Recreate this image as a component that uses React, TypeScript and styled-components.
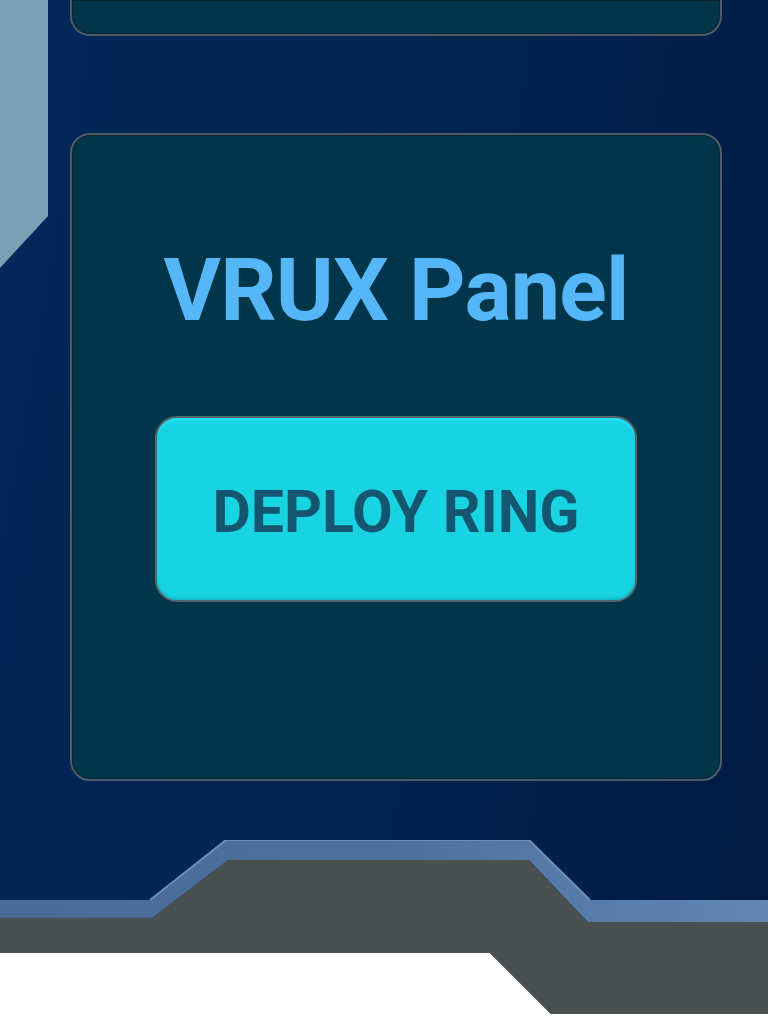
import styled, { createGlobalStyle } from "styled-components";

const GlobalStyle = createGlobalStyle`
	html, body {
		margin: 0;
		padding: 0;
		background: #ffffff;
	}
	body {
		font-family: Roboto, "Noto Sans", sans-serif;
	}
`;

const Scene = styled.div`
	width: 768px;
	height: 1024px;
	overflow: hidden;
	display: grid;
	grid-template-columns: 70px 652px 46px;
	grid-template-rows: 840px 184px;
	background: linear-gradient(100deg, #03275a 0%, #022452 45%, #011b42 100%);
`;

const SideColumn = styled.div`
	display: flex;
	align-items: flex-start;
`;

const Strip = styled.svg`
	display: block;
`;

const Column = styled.div`
	display: flex;
	flex-direction: column;
	gap: 97px;
`;

const Card = styled.div<{ $clipped?: boolean }>`
	box-sizing: border-box;
	background: #00354a;
	border: 2px solid #4d5c66;
	box-shadow: inset 0 0 0 1px #0d2330;
	border-radius: ${(p) => (p.$clipped ? "0 0 20px 20px" : "20px")};
	${(p) => (p.$clipped ? "border-top: none; height: 36px;" : "height: 648px;")}
`;

const PanelCard = styled(Card)`
	display: flex;
	flex-direction: column;
	align-items: center;
	padding-top: 111px;
`;

const Title = styled.h1`
	margin: 0;
	font-family: Roboto, sans-serif;
	font-weight: 700;
	font-size: 88px;
	line-height: 1;
	color: #55b7f8;
	letter-spacing: -0.8px;
`;

const DeployButton = styled.button`
	box-sizing: border-box;
	margin-top: 82px;
	padding-top: 5px;
	width: 482px;
	height: 186px;
	border-radius: 22px;
	border: 2px solid #55666c;
	background: #18d3e2;
	box-shadow: inset 0 3px 0 #1ee0ee, inset 0 -2px 2px #12b9c9;
	font-family: Roboto, sans-serif;
	font-weight: 700;
	font-size: 59px;
	color: #145670;
	cursor: pointer;
`;

const Frame = styled.svg`
	grid-column: 1 / span 3;
	display: block;
`;

const App = () => {
	return (
		<>
			<GlobalStyle />
			<Scene>
				<SideColumn>
					<Strip width="48" height="268" viewBox="0 0 48 268">
						<polygon points="0,0 48,0 48,216 0,268" fill="#7a9fb4" />
					</Strip>
				</SideColumn>
				<Column>
					<Card $clipped />
					<PanelCard>
						<Title>VRUX Panel</Title>
						<DeployButton>DEPLOY RING</DeployButton>
					</PanelCard>
				</Column>
				<div />
				<Frame width="768" height="184" viewBox="0 840 768 184">
					<defs>
						<linearGradient id="edge" x1="0" y1="0" x2="1" y2="0">
							<stop offset="0" stopColor="#4a6b98" />
							<stop offset="0.5" stopColor="#4d6f9c" />
							<stop offset="1" stopColor="#6187b5" />
						</linearGradient>
					</defs>
					{/* white floor below the frame */}
					<polygon points="0,953 490,953 551,1014 768,1014 768,1024 0,1024" fill="#ffffff" />
					{/* grey body */}
					<polygon
						points="0,918 152,918 228,860 529,860 588,922 768,922 768,1014 551,1014 490,953 0,953"
						fill="#4a4f4f"
					/>
					{/* blue bevel */}
					<polygon
						points="0,900 150,900 226,840 529,840 590,900 768,900 768,922 588,922 529,860 228,860 152,918 0,918"
						fill="url(#edge)"
					/>
					<polyline points="150,900 226,840 529,840 590,900" fill="none" stroke="#6a8fbf" strokeWidth="2" />
					<line x1="0" y1="918" x2="152" y2="918" stroke="#3d5578" strokeWidth="1" />
				</Frame>
			</Scene>
		</>
	);
};

export default App;
